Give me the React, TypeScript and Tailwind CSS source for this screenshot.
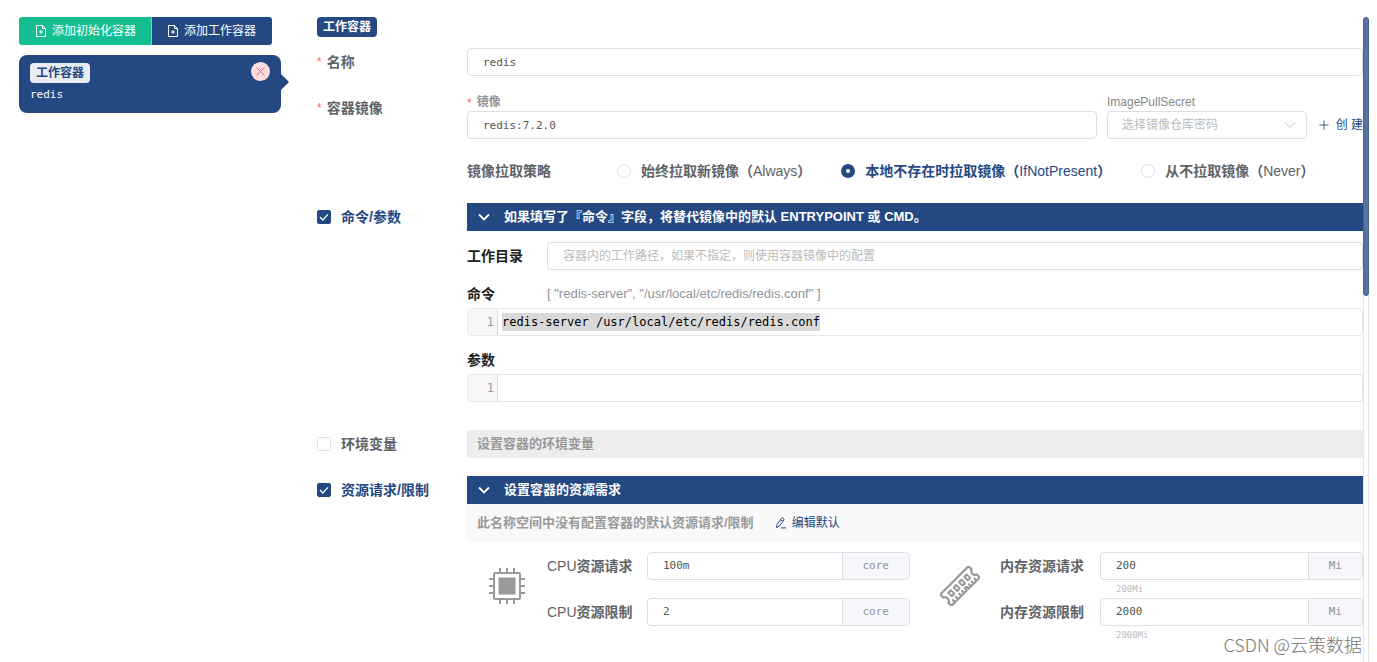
import React, { useState } from 'react';
import { Plus, X } from 'lucide-react';

const INPUT_CLASS =
  'h-7 w-full min-w-0 rounded border border-[#dcdfe6] bg-white px-[15px] font-[DejaVu_Sans_Mono,Noto_Sans_CJK_SC,monospace] text-[11px] text-[#555] outline-none placeholder:font-[Liberation_Sans,Noto_Sans_CJK_SC,sans-serif] placeholder:text-xs placeholder:text-[#bbb]';

function FileAddIcon() {
  return (
    <svg viewBox="0 0 12 12" className="h-3 w-3 shrink-0" fill="none" stroke="currentColor">
      <path d="M1.5 .5h6l3 3v8h-9zM7.5 .5v3h3M6 5v4M4 7h4" />
    </svg>
  );
}

function EditIcon() {
  return (
    <svg viewBox="0 0 12 12" className="h-3 w-3 shrink-0" fill="none" stroke="currentColor">
      <path d="M1.5 10.5l.5-3L6.5 1.2q.5-.6 1.2-.2l1 .7q.6.5.2 1.2L4.3 9.2zM5.5 2.8l2.4 1.7M6 10.9h5" />
    </svg>
  );
}

interface ArrowDownProps {
  className: string;
  strokeWidth: number;
}

function ArrowDown({ className, strokeWidth }: ArrowDownProps) {
  return (
    <svg viewBox="0 0 12 12" className={`h-3 w-3 shrink-0 ${className}`} fill="none" stroke="currentColor" strokeWidth={strokeWidth}>
      <path d="M1 3.5l5 5 5-5" />
    </svg>
  );
}

function CpuIcon() {
  return (
    <svg viewBox="0 0 36 36" className="h-9 w-9 text-[#999]" fill="none" stroke="currentColor" strokeWidth="2">
      <rect x="5" y="5" width="26" height="26" rx="1" />
      <rect x="9.5" y="9.5" width="17" height="17" fill="currentColor" stroke="none" />
      <path d="M11 0v5M18 0v5M25 0v5M11 31v5M18 31v5M25 31v5M0 11h5M0 18h5M0 25h5M31 11h5M31 18h5M31 25h5" />
    </svg>
  );
}

function MemoryIcon() {
  return (
    <svg viewBox="0 0 40 40" className="h-10 w-10 text-[#999]" fill="none" stroke="currentColor" strokeWidth="2.2" strokeLinejoin="round" strokeLinecap="round">
      <g transform="rotate(-45 20 20)">
        <path d="M0 12h40v4.500q-2.500.5-2.500 3.500t2.500 3.500V28H24v-2.500q-1-1.500-2.500 0V28H0v-4.500q2.500-.5 2.500-3.500T0 16.500z" />
        <path d="M5 25v2.500M9.500 25v2.500M14 25v2.500M18 25v2.500M27.500 25v2.500M31.500 25v2.500M35.500 25v2.500" />
        <path d="M7 16.500h3.500v5H7zM14.500 16.500H18v5h-3.500zM22 16.500h3.500v5H22zM29.500 16.500H33v5h-3.500z" strokeWidth="2" />
      </g>
    </svg>
  );
}

interface FormRowProps {
  label: React.ReactNode;
  children: React.ReactNode;
}

function FormRow({ label, children }: FormRowProps) {
  return (
    <div className="flex items-start">
      <div className="flex h-7 w-[150px] shrink-0 items-center text-sm font-bold text-[#606266]">{label}</div>
      <div className="min-w-0 flex-1">{children}</div>
    </div>
  );
}

function Required() {
  return <span className="mr-[5px] align-text-top text-xs font-normal text-[#f56c6c]">*</span>;
}

interface CheckLabelProps {
  id: string;
  text: string;
  defaultChecked?: boolean;
}

function CheckLabel({ id, text, defaultChecked = false }: CheckLabelProps) {
  const [checked, setChecked] = useState(defaultChecked);

  return (
    <label htmlFor={id} className={`flex items-center gap-2.5 ${checked ? 'text-[#244882]' : 'text-[#606266]'}`}>
      <span className="grid">
        <input
          id={id}
          type="checkbox"
          checked={checked}
          onChange={(e) => setChecked(e.target.checked)}
          className="col-start-1 row-start-1 h-3.5 w-3.5 appearance-none rounded-xs border border-[#dcdfe6] bg-white checked:border-[#244882] checked:bg-[#244882]"
        />
        {checked && (
          <svg viewBox="0 0 14 14" className="pointer-events-none col-start-1 row-start-1 h-3.5 w-3.5" fill="none" stroke="white" strokeWidth="1.2">
            <path d="M3 7l2.8 3L11 4.3" />
          </svg>
        )}
      </span>
      <span>{text}</span>
    </label>
  );
}

function SectionBar({ text }: { text: string }) {
  return (
    <button type="button" className="flex h-7 w-full items-center bg-[#244882] pl-[11px] text-left text-[13px] font-bold text-white">
      <ArrowDown className="mr-3.5" strokeWidth={1.8} />
      {text}
    </button>
  );
}

interface PolicyRadioProps {
  value: string;
  text: string;
  current: string;
  onSelect: (value: string) => void;
}

function PolicyRadio({ value, text, current, onSelect }: PolicyRadioProps) {
  const active = value === current;

  return (
    <label className={`flex items-center gap-2.5 text-sm whitespace-nowrap ${active ? 'text-[#244882]' : 'text-[#606266]'}`}>
      <input
        type="radio"
        name="pull-policy"
        value={value}
        checked={active}
        onChange={() => onSelect(value)}
        className="h-3.5 w-3.5 shrink-0 appearance-none rounded-full border border-[#dcdfe6] bg-white checked:border-[5px] checked:border-[#244882]"
      />
      <span>
        <b>{text}（</b>
        {value}
        <b>）</b>
      </span>
    </label>
  );
}

interface CodeLineProps {
  id: string;
  defaultValue?: string;
}

function CodeLine({ id, defaultValue = '' }: CodeLineProps) {
  return (
    <div className="flex h-7 overflow-hidden rounded border border-[#e4e7ed] font-[DejaVu_Sans_Mono,monospace] text-xs">
      <span className="flex w-[30px] shrink-0 items-center justify-end border-r border-[#ddd] bg-[#f7f7f7] pr-[3px] text-[#999]">1</span>
      <input
        id={id}
        defaultValue={defaultValue}
        className={`ml-1 h-[18px] self-center text-black outline-none ${defaultValue ? 'w-[44ch] bg-[#d9d9d9]' : 'min-w-0 flex-1'}`}
      />
    </div>
  );
}

interface ResourceFieldProps {
  id: string;
  prefix?: string;
  label: string;
  value: string;
  unit: string;
  hint?: string;
}

function ResourceField({ id, prefix, label, value, unit, hint }: ResourceFieldProps) {
  return (
    <div className="flex h-[46px] items-start">
      <label htmlFor={id} className="flex h-7 w-[100px] shrink-0 items-center text-sm text-[#606266]">
        {prefix}
        <b>{label}</b>
      </label>
      <div className="min-w-0 flex-1">
        <div className="flex h-7 overflow-hidden rounded border border-[#dcdfe6] font-[DejaVu_Sans_Mono,monospace] text-[11px]">
          <input id={id} defaultValue={value} className="min-w-0 flex-1 px-[15px] text-[#555] outline-none" />
          <span className="flex items-center border-l border-[#dcdfe6] bg-[#f5f7fa] px-5 text-[#909399]">{unit}</span>
        </div>
        {hint && <p className="pl-4 font-[DejaVu_Sans_Mono,monospace] text-[9px] leading-[18px] text-[#bbb]">{hint}</p>}
      </div>
    </div>
  );
}

function Sidebar() {
  return (
    <aside className="w-[262px] shrink-0">
      <div className="flex text-xs text-white">
        <button type="button" className="flex h-7 items-center gap-[5px] rounded-l-[3px] border-r border-[#a7b6cd] bg-[#13bf91] pr-[15px] pl-4">
          <FileAddIcon />
          添加初始化容器
        </button>
        <button type="button" className="flex h-7 items-center gap-[5px] rounded-r-[3px] bg-[#244882] pr-4 pl-[15px]">
          <FileAddIcon />
          添加工作容器
        </button>
      </div>
      <div className="relative mt-2.5 flex h-[58px] items-start justify-between rounded-lg bg-[#244882] pt-[7px] pr-[11px] pl-[11px]">
        <div>
          <span className="mt-px flex h-5 w-[60px] items-center justify-center rounded bg-[#e9edf3] text-xs font-bold text-[#244882]">工作容器</span>
          <p className="mt-1 font-[DejaVu_Sans_Mono,monospace] text-[11px] leading-4 text-white">redis</p>
        </div>
        <button type="button" aria-label="删除" className="flex h-[19px] w-[19px] items-center justify-center rounded-full bg-[#fddcdf] text-[#f5566c]">
          <X className="h-[15px] w-[15px]" strokeWidth={1.5} />
        </button>
        <span className="absolute top-[19px] left-full border-y-8 border-l-8 border-y-transparent border-l-[#244882]" />
      </div>
    </aside>
  );
}

export default function App() {
  const [policy, setPolicy] = useState('IfNotPresent');

  return (
    <div className="relative flex min-h-screen bg-white pt-[17px] pr-2 pl-[19px] font-[Liberation_Sans,Noto_Sans_CJK_SC,sans-serif]">
      <Sidebar />

      <main className="ml-9 min-w-0 flex-1">
        <span className="flex h-5 w-[60px] items-center justify-center rounded bg-[#244882] text-xs font-bold text-white">工作容器</span>

        <form className="mt-[11px] flex flex-col gap-[18px]">
          <FormRow label={<label htmlFor="name"><Required />名称</label>}>
            <input id="name" defaultValue="redis" className={`${INPUT_CLASS} block`} />
          </FormRow>

          <FormRow label={<span><Required />容器镜像</span>}>
            <div className="flex items-end gap-2.5">
              <div className="min-w-0 flex-1">
                <label htmlFor="image" className="block h-[17px] text-xs leading-4 font-bold text-[#909399]">
                  <Required />镜像
                </label>
                <input id="image" defaultValue="redis:7.2.0" className={`${INPUT_CLASS} block`} />
              </div>
              <div className="w-[200px] shrink-0">
                <label htmlFor="secret" className="block h-[17px] text-xs leading-4 text-[#888]">ImagePullSecret</label>
                <div className="grid">
                  <select id="secret" className="col-start-1 row-start-1 h-7 appearance-none rounded border border-[#dcdfe6] bg-white pl-3.5 text-xs text-[#bbb] outline-none">
                    <option>选择镜像仓库密码</option>
                  </select>
                  <ArrowDown className="pointer-events-none col-start-1 row-start-1 mr-[11px] self-center justify-self-end text-[#c0c4cc]" strokeWidth={1} />
                </div>
              </div>
              <button type="button" className="flex h-7 w-[46px] shrink-0 items-center justify-between text-xs whitespace-nowrap text-[#244882]">
                <Plus className="h-3.5 w-3.5" strokeWidth={1.5} />
                创 建
              </button>
            </div>
            <div className="mt-[18px] flex h-7 items-center">
              <span className="w-[150px] shrink-0 text-sm font-bold text-[#606266]">镜像拉取策略</span>
              <div className="flex gap-[30px]">
                <PolicyRadio value="Always" text="始终拉取新镜像" current={policy} onSelect={setPolicy} />
                <PolicyRadio value="IfNotPresent" text="本地不存在时拉取镜像" current={policy} onSelect={setPolicy} />
                <PolicyRadio value="Never" text="从不拉取镜像" current={policy} onSelect={setPolicy} />
              </div>
            </div>
          </FormRow>

          <FormRow label={<CheckLabel id="use-command" text="命令/参数" defaultChecked />}>
            <SectionBar text="如果填写了『命令』字段，将替代镜像中的默认 ENTRYPOINT 或 CMD。" />
            <div className="flex items-center pt-[11px] text-sm text-[#222]">
              <label htmlFor="workdir" className="w-20 shrink-0 font-bold">工作目录</label>
              <input id="workdir" placeholder="容器内的工作路径，如果不指定，则使用容器镜像中的配置" className={INPUT_CLASS} />
            </div>
            <div className="mt-2.5 flex h-7 items-center">
              <label htmlFor="command" className="w-20 shrink-0 text-sm font-bold text-[#222]">命令</label>
              <span className="text-[13px] text-[#909399]">[ "redis-server", "/usr/local/etc/redis/redis.conf" ]</span>
            </div>
            <CodeLine id="command" defaultValue="redis-server /usr/local/etc/redis/redis.conf" />
            <label htmlFor="args" className="mt-2.5 flex h-7 items-center text-sm font-bold text-[#222]">参数</label>
            <CodeLine id="args" />
            <div className="h-2.5" />
          </FormRow>

          <FormRow label={<CheckLabel id="use-env" text="环境变量" />}>
            <div className="flex h-7 items-center bg-[#ededed] pl-2.5 text-[13px] font-bold text-[#999]">设置容器的环境变量</div>
          </FormRow>

          <FormRow label={<CheckLabel id="use-resources" text="资源请求/限制" defaultChecked />}>
            <SectionBar text="设置容器的资源需求" />
            <div className="flex h-[38px] items-center bg-[#f9f9f9] pl-2.5">
              <span className="text-[13px] font-bold text-[#999]">此名称空间中没有配置容器的默认资源请求/限制</span>
              <button type="button" className="ml-[21px] flex items-center gap-[5px] text-xs text-[#244882]">
                <EditIcon />
                编辑默认
              </button>
            </div>
            <div className="grid grid-cols-2 gap-2.5 pt-2.5">
              <div className="flex">
                <div className="flex h-[68px] w-20 shrink-0 items-center justify-center"><CpuIcon /></div>
                <div className="min-w-0 flex-1">
                  <ResourceField id="cpu-request" prefix="CPU" label="资源请求" value="100m" unit="core" />
                  <ResourceField id="cpu-limit" prefix="CPU" label="资源限制" value="2" unit="core" />
                </div>
              </div>
              <div className="flex">
                <div className="flex h-[68px] w-20 shrink-0 items-center justify-center"><MemoryIcon /></div>
                <div className="min-w-0 flex-1">
                  <ResourceField id="memory-request" label="内存资源请求" value="200" unit="Mi" hint="200Mi" />
                  <ResourceField id="memory-limit" label="内存资源限制" value="2000" unit="Mi" hint="2000Mi" />
                </div>
              </div>
            </div>
          </FormRow>
        </form>
      </main>

      <div className="w-1.5 shrink-0 border-x border-[#e5e5e5]">
        <div className="-mx-px h-[279px] rounded-full border border-[#446291] bg-[#5c739e]" />
      </div>

      <span className="absolute right-[15px] bottom-1 font-[Noto_Sans_CJK_SC,sans-serif] text-lg leading-7 font-light text-[#777]">CSDN @云策数据</span>
    </div>
  );
}
